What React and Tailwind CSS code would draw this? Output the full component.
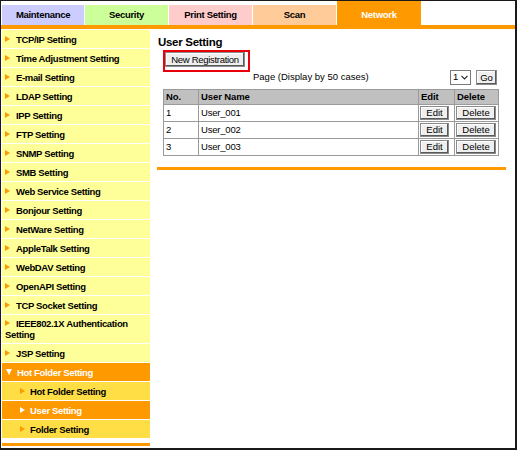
import React from "react";

const tabs = [
  { label: "Maintenance", w: "w-[82px]", bg: "bg-[#ccccff]" },
  { label: "Security", w: "w-[83px]", bg: "bg-[#ccff99]" },
  { label: "Print Setting", w: "w-[83px]", bg: "bg-[#ffcccc]" },
  { label: "Scan", w: "w-[83px]", bg: "bg-[#ffcc99]" },
];

const menu = [
  { label: "TCP/IP Setting" },
  { label: "Time Adjustment Setting" },
  { label: "E-mail Setting" },
  { label: "LDAP Setting" },
  { label: "IPP Setting" },
  { label: "FTP Setting" },
  { label: "SNMP Setting" },
  { label: "SMB Setting" },
  { label: "Web Service Setting" },
  { label: "Bonjour Setting" },
  { label: "NetWare Setting" },
  { label: "AppleTalk Setting" },
  { label: "WebDAV Setting" },
  { label: "OpenAPI Setting" },
  { label: "TCP Socket Setting" },
  { label: "IEEE802.1X Authentication Setting", tall: true },
  { label: "JSP Setting" },
  { label: "Hot Folder Setting", kind: "open" },
  { label: "Hot Folder Setting", kind: "sub" },
  { label: "User Setting", kind: "active" },
  { label: "Folder Setting", kind: "sub" },
];

const users = [
  { no: 1, name: "User_001" },
  { no: 2, name: "User_002" },
  { no: 3, name: "User_003" },
];

function Arrow({ white }) {
  return (
    <span
      className={
        "inline-block w-0 h-0 align-middle mb-[2px] border-y-[3px] border-y-transparent border-l-[5px] " +
        (white ? "border-l-white" : "border-l-[#ff9900]")
      }
    />
  );
}

function MenuItem({ item }) {
  if (item.kind === "open") {
    return (
      <div className="bg-[#ff9900] text-white pl-[4px] py-[3.5px] leading-[11px] border-b border-white">
        <span className="inline-block w-0 h-0 align-middle mb-[2px] border-x-[3px] border-x-transparent border-t-[6px] border-t-white mr-[5px]" />
        {item.label}
      </div>
    );
  }
  if (item.kind === "sub" || item.kind === "active") {
    const active = item.kind === "active";
    return (
      <div
        className={
          "pl-[18px] py-[3.5px] leading-[11px] border-b border-white " +
          (active ? "bg-[#ff9900] text-white" : "bg-[#ffdd44] text-black")
        }
      >
        <Arrow white={active} />
        <span className="ml-[5px]">{item.label}</span>
      </div>
    );
  }
  return (
    <div
      className={
        "bg-[#ffff99] text-black pl-[3px] leading-[11px] border-b border-white " +
        (item.tall ? "py-[3px]" : "py-[3.5px]")
      }
    >
      <Arrow />
      <span className="ml-[6px]">{item.label}</span>
    </div>
  );
}

function SmallButton({ children, className }) {
  return (
    <button
      className={
        "h-[14px] border border-[#8a8a8a] bg-[#efefef] shadow-[inset_-1px_-1px_0_#5a5a5a,inset_1px_1px_0_#ffffff] text-[9.5px] leading-[12px] text-black " +
        (className || "")
      }
    >
      {children}
    </button>
  );
}

export default function App() {
  return (
    <div className="w-[517px] h-[450px] bg-white border-t border-l border-r-2 border-b-2 border-[#1a1a1a] overflow-hidden font-['Liberation_Sans',Arial,sans-serif]">
      {/* tab row */}
      <div className="flex items-end gap-px h-[24px] pl-px">
        {tabs.map((t) => (
          <div
            key={t.label}
            className={`${t.w} ${t.bg} h-[20px] flex items-center justify-center text-[9.5px] font-bold tracking-[-0.3px] text-black`}
          >
            {t.label}
          </div>
        ))}
        <div className="w-[84px] h-[24px] bg-[#ff9900] flex items-center justify-center pt-[4px] text-[9.5px] font-bold tracking-[-0.3px] text-white">
          Network
        </div>
      </div>
      <div className="h-[4px] bg-[#ff9900]" />

      <div className="flex mt-px">
        {/* side menu */}
        <div className="w-[148px] ml-px text-[9.5px] font-bold tracking-[-0.35px]">
          {menu.map((m, i) => (
            <MenuItem key={i} item={m} />
          ))}
          <div className="mt-[4px] h-[3px] bg-[#ff9900]" />
        </div>

        {/* main */}
        <div className="flex-1 pt-[4px] text-black">
          <h3 className="ml-[8px] text-[11.5px] leading-[16px] font-bold tracking-[-0.3px]">
            User Setting
          </h3>
          <div className="ml-[13px] flex w-fit border-2 border-[#e8000b] pr-[3px] pb-[3px]">
            <SmallButton className="w-[80px] h-[15px] tracking-[-0.3px]">
              New Registration
            </SmallButton>
          </div>

          <div className="ml-[13px] -mt-[2px] w-[334px] h-[15px] flex items-center">
            <span className="ml-[90px] text-[9.5px]">Page (Display by 50 cases)</span>
            <div className="flex-1" />
            <div className="w-[21px] h-[15px] border border-[#7a7a7a] bg-white flex items-center justify-between px-[2px] text-[9.5px]">
              <span>1</span>
              <svg width="7" height="5" viewBox="0 0 7 5">
                <path d="M0.5 0.8 L3.5 4 L6.5 0.8" fill="none" stroke="#222" strokeWidth="1.1" />
              </svg>
            </div>
            <SmallButton className="ml-[5px] w-[21px] h-[15px]">Go</SmallButton>
          </div>

          <table className="ml-[13px] mt-[4px] w-[335px] table-fixed border-collapse text-[9.5px]">
            <colgroup>
              <col className="w-[35px]" />
              <col className="w-[220px]" />
              <col className="w-[36px]" />
              <col className="w-[44px]" />
            </colgroup>
            <thead>
              <tr className="h-[15px] bg-[#c0c0c0]">
                <th className="border border-[#9a9a9a] text-left pl-[2px] font-bold tracking-[-0.1px]">No.</th>
                <th className="border border-[#9a9a9a] text-left pl-[2px] font-bold tracking-[-0.1px]">User Name</th>
                <th className="border border-[#9a9a9a] text-left pl-[2px] font-bold tracking-[-0.1px]">Edit</th>
                <th className="border border-[#9a9a9a] text-left pl-[2px] font-bold tracking-[-0.1px]">Delete</th>
              </tr>
            </thead>
            <tbody>
              {users.map((u) => (
                <tr key={u.no} className="h-[17px] bg-white">
                  <td className="border border-[#9a9a9a] pl-[2px]">{u.no}</td>
                  <td className="border border-[#9a9a9a] pl-[2px] tracking-[-0.2px]">{u.name}</td>
                  <td className="border border-[#9a9a9a] pl-px">
                    <SmallButton className="w-[29px] block">Edit</SmallButton>
                  </td>
                  <td className="border border-[#9a9a9a] pl-px">
                    <SmallButton className="w-[40px] block">Delete</SmallButton>
                  </td>
                </tr>
              ))}
            </tbody>
          </table>

          <div className="ml-[7px] mt-[11px] w-[349px] h-[3px] bg-[#ff9900]" />
        </div>
      </div>
    </div>
  );
}
